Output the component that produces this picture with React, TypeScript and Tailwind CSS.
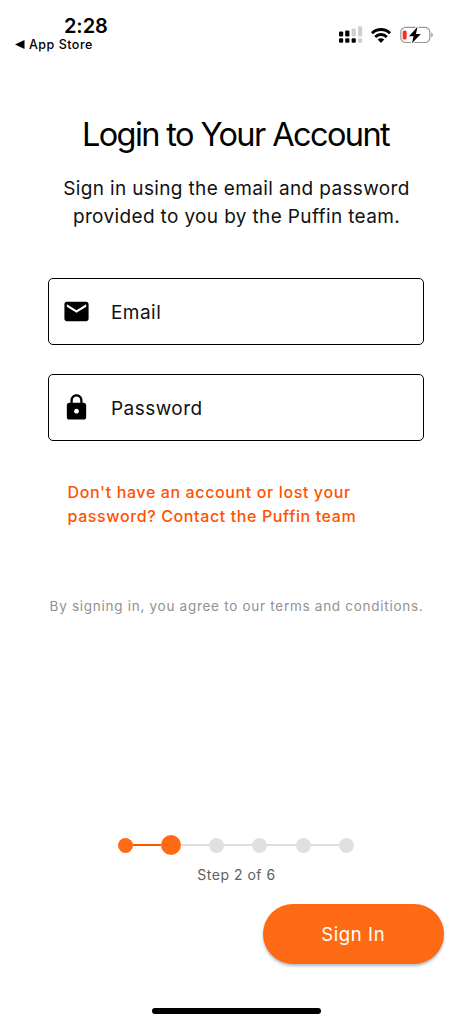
import React from 'react';
import { MdEmail, MdLock } from 'react-icons/md';

const TOTAL_STEPS = 6;

const StatusBar: React.FC = () => (
  <header className="flex h-[60px] justify-between pt-[15px] pr-[39px] pl-[15px]">
    <div>
      <div className="pl-[49px] text-[20px] leading-[22px] font-semibold tracking-[-0.1px]">2:28</div>
      <div className="flex items-center text-[12.5px] leading-[15px] font-medium tracking-[0.5px]">
        <svg width="10" height="9" viewBox="0 0 10 9" className="mr-[4px]">
          <path d="M0 4.5 9.5 0v9z" />
        </svg>
        App Store
      </div>
    </div>
    <div className="flex h-[20px] items-center pt-[20px]">
      {/* dual SIM signal */}
      <svg width="24" height="18" viewBox="0 0 24 18">
        <g fill="#000">
          <rect x="0" y="5.4" width="4.2" height="5" rx="1.2" />
          <rect x="6.2" y="4.4" width="4.2" height="6" rx="1.2" />
          <rect x="0" y="12.2" width="4.2" height="4.5" rx="1.2" />
          <rect x="6.2" y="12.2" width="4.2" height="4.5" rx="1.2" />
          <rect x="12.6" y="12.2" width="4.2" height="4.5" rx="1.2" />
        </g>
        <g fill="#cfcfcf">
          <rect x="12.6" y="2.4" width="4.2" height="8" rx="1.2" />
          <rect x="19" y="0.2" width="4.2" height="10.2" rx="1.2" />
          <rect x="19" y="12.2" width="4.2" height="4.5" rx="1.2" />
        </g>
      </svg>
      <svg width="20" height="15" viewBox="0 0 20 15" className="ml-[8px]">
        <g fill="none" stroke="#000" strokeWidth="2.9">
          <path d="M1 5.2a12.8 12.8 0 0 1 18 0" />
          <path d="M4.2 8.9a8.2 8.2 0 0 1 11.6 0" />
        </g>
        <path d="M6.7 11.6a4.7 4.7 0 0 1 6.6 0L10 15z" />
      </svg>
      <svg width="34" height="18" viewBox="0 0 34 18" className="ml-[9px]">
        <rect x="0.8" y="1.3" width="29" height="15.2" rx="4.8" fill="none" stroke="#999" strokeWidth="1.2" />
        <path d="M31.4 6.6c1.7.6 1.7 4.2 0 4.8z" fill="#888" />
        <rect x="2.7" y="4.4" width="4" height="9" rx="1.5" fill="#fb2c23" />
        <path d="M17.6.8 9 10.2h4.6L12 17.2 20.8 8h-4.9z" stroke="#fff" strokeWidth="2.4" />
        <path d="M17.6.8 9 10.2h4.6L12 17.2 20.8 8h-4.9z" />
      </svg>
    </div>
  </header>
);

interface FieldProps {
  label: string;
  icon: React.ReactNode;
}

const Field: React.FC<FieldProps> = ({ label, icon }) => (
  <label className="flex h-[67px] items-center rounded-[5px] border-[1.4px] border-black pl-[13px]">
    {icon}
    <span className="ml-[20px] pt-[2px] text-[19px] leading-[24px] tracking-[0.45px] text-[#111]">{label}</span>
  </label>
);

const Stepper: React.FC<{ current: number }> = ({ current }) => (
  <div className="mr-px flex h-[20px] w-[236px] items-center">
    {Array.from({ length: TOTAL_STEPS }, (_, i) => i + 1).map((step) => (
      <React.Fragment key={step}>
        {step > 1 && (
          <div className={`h-[2px] flex-1 ${step <= current ? 'bg-[#ff5500]' : 'bg-[#dcdcdc]'}`} />
        )}
        <div
          className={`shrink-0 rounded-full ${
            step === current
              ? 'size-[19.5px] bg-[#ff6b14]'
              : step < current
                ? 'size-[15px] bg-[#ff6b14]'
                : 'size-[15px] bg-[#e0e0e0]'
          }`}
        />
      </React.Fragment>
    ))}
  </div>
);

const App: React.FC = () => {
  return (
    <div className="flex h-[1024px] w-[473px] flex-col bg-white font-['Inter','Liberation_Sans',sans-serif] text-black">
      <StatusBar />

      <main className="flex flex-1 flex-col">
        <h1 className="mt-[55px] pr-[2px] text-center text-[32.5px] leading-[40px] tracking-[-1.6px]">
          Login to Your Account
        </h1>
        <p className="mt-[20px] text-center text-[19px] leading-[27.5px] tracking-[0.36px] text-[#111]">
          Sign in using the email and password
          <br />
          provided to you by the Puffin team.
        </p>

        <form className="mt-[48px] flex flex-col gap-[29px] pr-[49px] pl-[48px]">
          <Field label="Email" icon={<MdEmail size={29} />} />
          <Field label="Password" icon={<MdLock size={29} />} />
        </form>

        <a className="mt-[39px] ml-[67.5px] text-[16px] leading-[24px] font-medium tracking-[0.62px] text-[#ff5200]">
          Don't have an account or lost your
          <br />
          password? Contact the Puffin team
        </a>

        <p className="mt-[68px] text-center text-[13.5px] leading-[20px] tracking-[0.72px] whitespace-nowrap text-[#929292]">
          By signing in, you agree to our terms and conditions.
        </p>

        <div className="mt-auto flex flex-col items-center">
          <Stepper current={2} />
          <p className="mt-[10px] text-[14px] leading-[20px] tracking-[0.5px] text-[#606060]">Step 2 of 6</p>
        </div>

        <button className="mt-[19px] mr-[29.5px] h-[60px] w-[180.5px] self-end rounded-full bg-[#ff6b14] pt-px text-[18.5px] tracking-[0.6px] text-white shadow-[0_2px_3px_rgba(60,90,110,0.4)]">
          Sign In
        </button>
      </main>

      <footer className="flex h-[60px] justify-center pt-[44px]">
        <div className="h-[6px] w-[168.5px] rounded-full bg-black" />
      </footer>
    </div>
  );
};

export default App;
